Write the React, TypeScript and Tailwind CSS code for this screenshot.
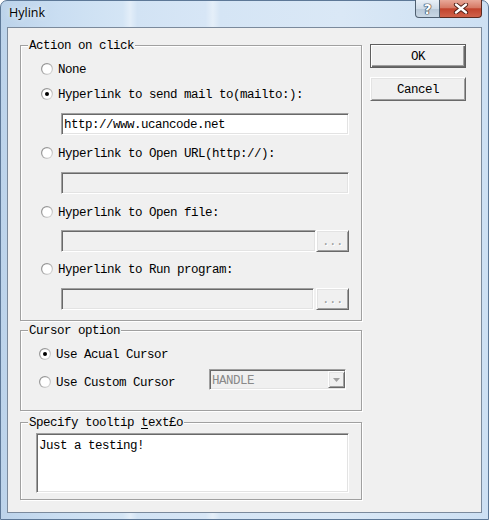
import React from 'react';

// classic win32 bevels
const SUNKEN =
  'border border-t-[#a0a0a0] border-l-[#a0a0a0] border-r-white border-b-white shadow-[inset_1px_1px_0_#696969,inset_-1px_-1px_0_#e3e3e3]';
const RAISED =
  'border border-t-white border-l-white border-r-[#696969] border-b-[#696969] shadow-[inset_1px_1px_0_#e3e3e3,inset_-1px_-1px_0_#a0a0a0] bg-[#f0f0f0]';

const Radio = ({ checked = false }: { checked?: boolean }) => (
  <svg width="12" height="12" viewBox="0 0 12 12" className="shrink-0">
    <defs>
      <linearGradient id="rbEdge" x1="0" y1="0" x2="1" y2="1">
        <stop offset="0" stopColor="#7c7c7c" />
        <stop offset="0.55" stopColor="#b4b4b4" />
        <stop offset="1" stopColor="#eaeaea" />
      </linearGradient>
    </defs>
    <circle cx="6" cy="6" r="6" fill="url(#rbEdge)" />
    <circle cx="6" cy="6" r="4.8" fill="#fff" />
    {checked && <circle cx="6" cy="6" r="2" fill="#000" />}
  </svg>
);

const RadioRow = ({ label, checked, className = '' }: { label: string; checked?: boolean; className?: string }) => (
  <div className={`flex items-center gap-[5px] h-[16px] ${className}`}>
    <Radio checked={checked} />
    <span className="pt-[2px] leading-[16px] whitespace-pre">{label}</span>
  </div>
);

const Field = ({ value = '', disabled = false, className = '' }: { value?: string; disabled?: boolean; className?: string }) => (
  <div className={`h-[22px] flex items-center pl-[2px] ${SUNKEN} ${disabled ? 'bg-[#f0f0f0]' : 'bg-white'} ${className}`}>
    <span className="pt-[2px] leading-[14px] whitespace-pre">{value}</span>
  </div>
);

const DotsButton = () => (
  <div className={`w-[33px] h-[22px] flex items-center justify-center ${RAISED}`}>
    <span className="pt-[2px] text-[#a0a0a0] leading-[14px] [text-shadow:1px_1px_0_#fff]">...</span>
  </div>
);

const Group = ({ label, className = '', children }: { label: React.ReactNode; className?: string; children: React.ReactNode }) => (
  <div className={`relative border border-[#a0a0a0] shadow-[1px_1px_0_#fff,inset_1px_1px_0_#fff] ${className}`}>
    <span className="absolute top-[-7px] left-[7px] px-[1px] bg-[#f0f0f0] leading-[14px] whitespace-pre">{label}</span>
    {children}
  </div>
);

const App: React.FC = () => {
  return (
    <div className="w-[489px] h-[520px] flex flex-col border border-[#5d7897] rounded-t-[7px] bg-[linear-gradient(90deg,#bcd3ea_0%,#cadef2_12%,#d4e5f5_25%,#e3eef9_26.5%,#d2e3f4_28%,#d7e6f6_42%,#e5eff9_43.5%,#d5e5f5_45%,#dae8f6_70%,#cde0f3_100%)]">
      {/* Title bar */}
      <div className="h-[26px] shrink-0 flex items-start justify-between pl-[8px] pr-[6px]">
        <span className="mt-[4px] font-['Open_Sans','Noto_Sans',sans-serif] text-[12.5px] leading-[16px] text-black [text-shadow:0_0_6px_#fff]">
          Hylink
        </span>
        <div className="flex -mt-px">
          <div className="w-[25px] h-[18px] flex items-center justify-center rounded-bl-[4px] border border-t-0 border-[#4f5f70] bg-[linear-gradient(180deg,#e9f0f7_0%,#cfdbe7_50%,#b7c7d7_51%,#c9d7e4_100%)]">
            <span className="font-['DejaVu_Sans',sans-serif] font-bold text-[14px] leading-[14px] text-white [text-shadow:0_0_1px_#2c3a48,0_0_1px_#2c3a48,0_0_1px_#2c3a48,0_0_1px_#2c3a48]">
              ?
            </span>
          </div>
          <div className="w-[42px] h-[18px] flex items-center justify-center rounded-br-[4px] border border-t-0 border-l-0 border-[#5a2a20] bg-[linear-gradient(180deg,#e8a899_0%,#d67a66_45%,#c1432d_52%,#d0624a_100%)]">
            <svg width="16" height="11" viewBox="0 0 16 11">
              <path d="M3 1.5 L13 9.5 M13 1.5 L3 9.5" stroke="#4a1a12" strokeWidth="4.2" strokeLinecap="round" fill="none" />
              <path d="M3 1.5 L13 9.5 M13 1.5 L3 9.5" stroke="#fff" strokeWidth="2.4" strokeLinecap="round" fill="none" />
            </svg>
          </div>
        </div>
      </div>

      {/* Client area */}
      <div className="flex-1 mx-[6px] mb-[6px] border border-[#7b8a9c] bg-[#f0f0f0] flex items-start gap-[8px] pt-[16px] pl-[12px] font-['Liberation_Mono','DejaVu_Sans_Mono',monospace] text-[12.5px] tracking-[-0.5px] text-black">
        <div className="w-[342px] pt-px flex flex-col">
          <Group label="Action on click" className="h-[276px] pt-[15px] pl-[20px]">
            <RadioRow label="None" />
            <RadioRow label="Hyperlink to send mail to(mailto:):" checked className="mt-[9px]" />
            <Field value="http://www.ucancode.net" className="mt-[11px] ml-[20px] w-[288px]" />
            <RadioRow label="Hyperlink to Open URL(http://):" className="mt-[10px]" />
            <Field disabled className="mt-[11px] ml-[20px] w-[288px]" />
            <RadioRow label="Hyperlink to Open file:" className="mt-[10px]" />
            <div className="mt-[10px] ml-[20px] flex">
              <Field disabled className="w-[255px]" />
              <DotsButton />
            </div>
            <RadioRow label="Hyperlink to Run program:" className="mt-[9px]" />
            <div className="mt-[11px] ml-[20px] flex gap-[2px]">
              <Field disabled className="w-[253px]" />
              <DotsButton />
            </div>
          </Group>

          <Group label="Cursor option" className="mt-[9px] h-[81px] pt-[15px] pl-[18px]">
            <RadioRow label="Use Acual Cursor" checked />
            <div className="mt-[7px] flex items-center h-[21px]">
              <div className="w-[170px] mt-[4px]">
                <RadioRow label="Use Custom Cursor" />
              </div>
              <div className={`w-[137px] h-[21px] flex items-center bg-[#f0f0f0] ${SUNKEN}`}>
                <span className="flex-1 pl-[2px] pt-[2px] leading-[14px] text-[#8a8a8a]">HANDLE</span>
                <div className={`w-[17px] h-[17px] flex items-center justify-center ${RAISED}`}>
                  <svg width="7" height="4" viewBox="0 0 7 4">
                    <path d="M0 0 H7 L3.5 4 Z" fill="#a0a0a0" />
                  </svg>
                </div>
              </div>
            </div>
          </Group>

          <Group
            label={
              <>
                Specify tooltip <span className="underline underline-offset-2">t</span>ext£o
              </>
            }
            className="mt-[11px] h-[78px] pt-[10px] pl-[15px]"
          >
            <div className={`w-[313px] h-[60px] bg-white pt-[3px] pl-[2px] ${SUNKEN}`}>
              <span className="leading-[14px]">Just a testing!</span>
            </div>
          </Group>
        </div>

        {/* Buttons */}
        <div className="w-[96px] flex flex-col gap-[9px]">
          <div className="h-[24px] pt-[2px] flex items-center justify-center bg-[#f0f0f0] border border-[#5f5f5f] shadow-[inset_1px_1px_0_#fff,inset_-1px_-1px_0_#696969,inset_-2px_-2px_0_#a0a0a0]">
            OK
          </div>
          <div className={`h-[24px] pt-[2px] flex items-center justify-center ${RAISED}`}>Cancel</div>
        </div>
      </div>
    </div>
  );
};

export default App;
